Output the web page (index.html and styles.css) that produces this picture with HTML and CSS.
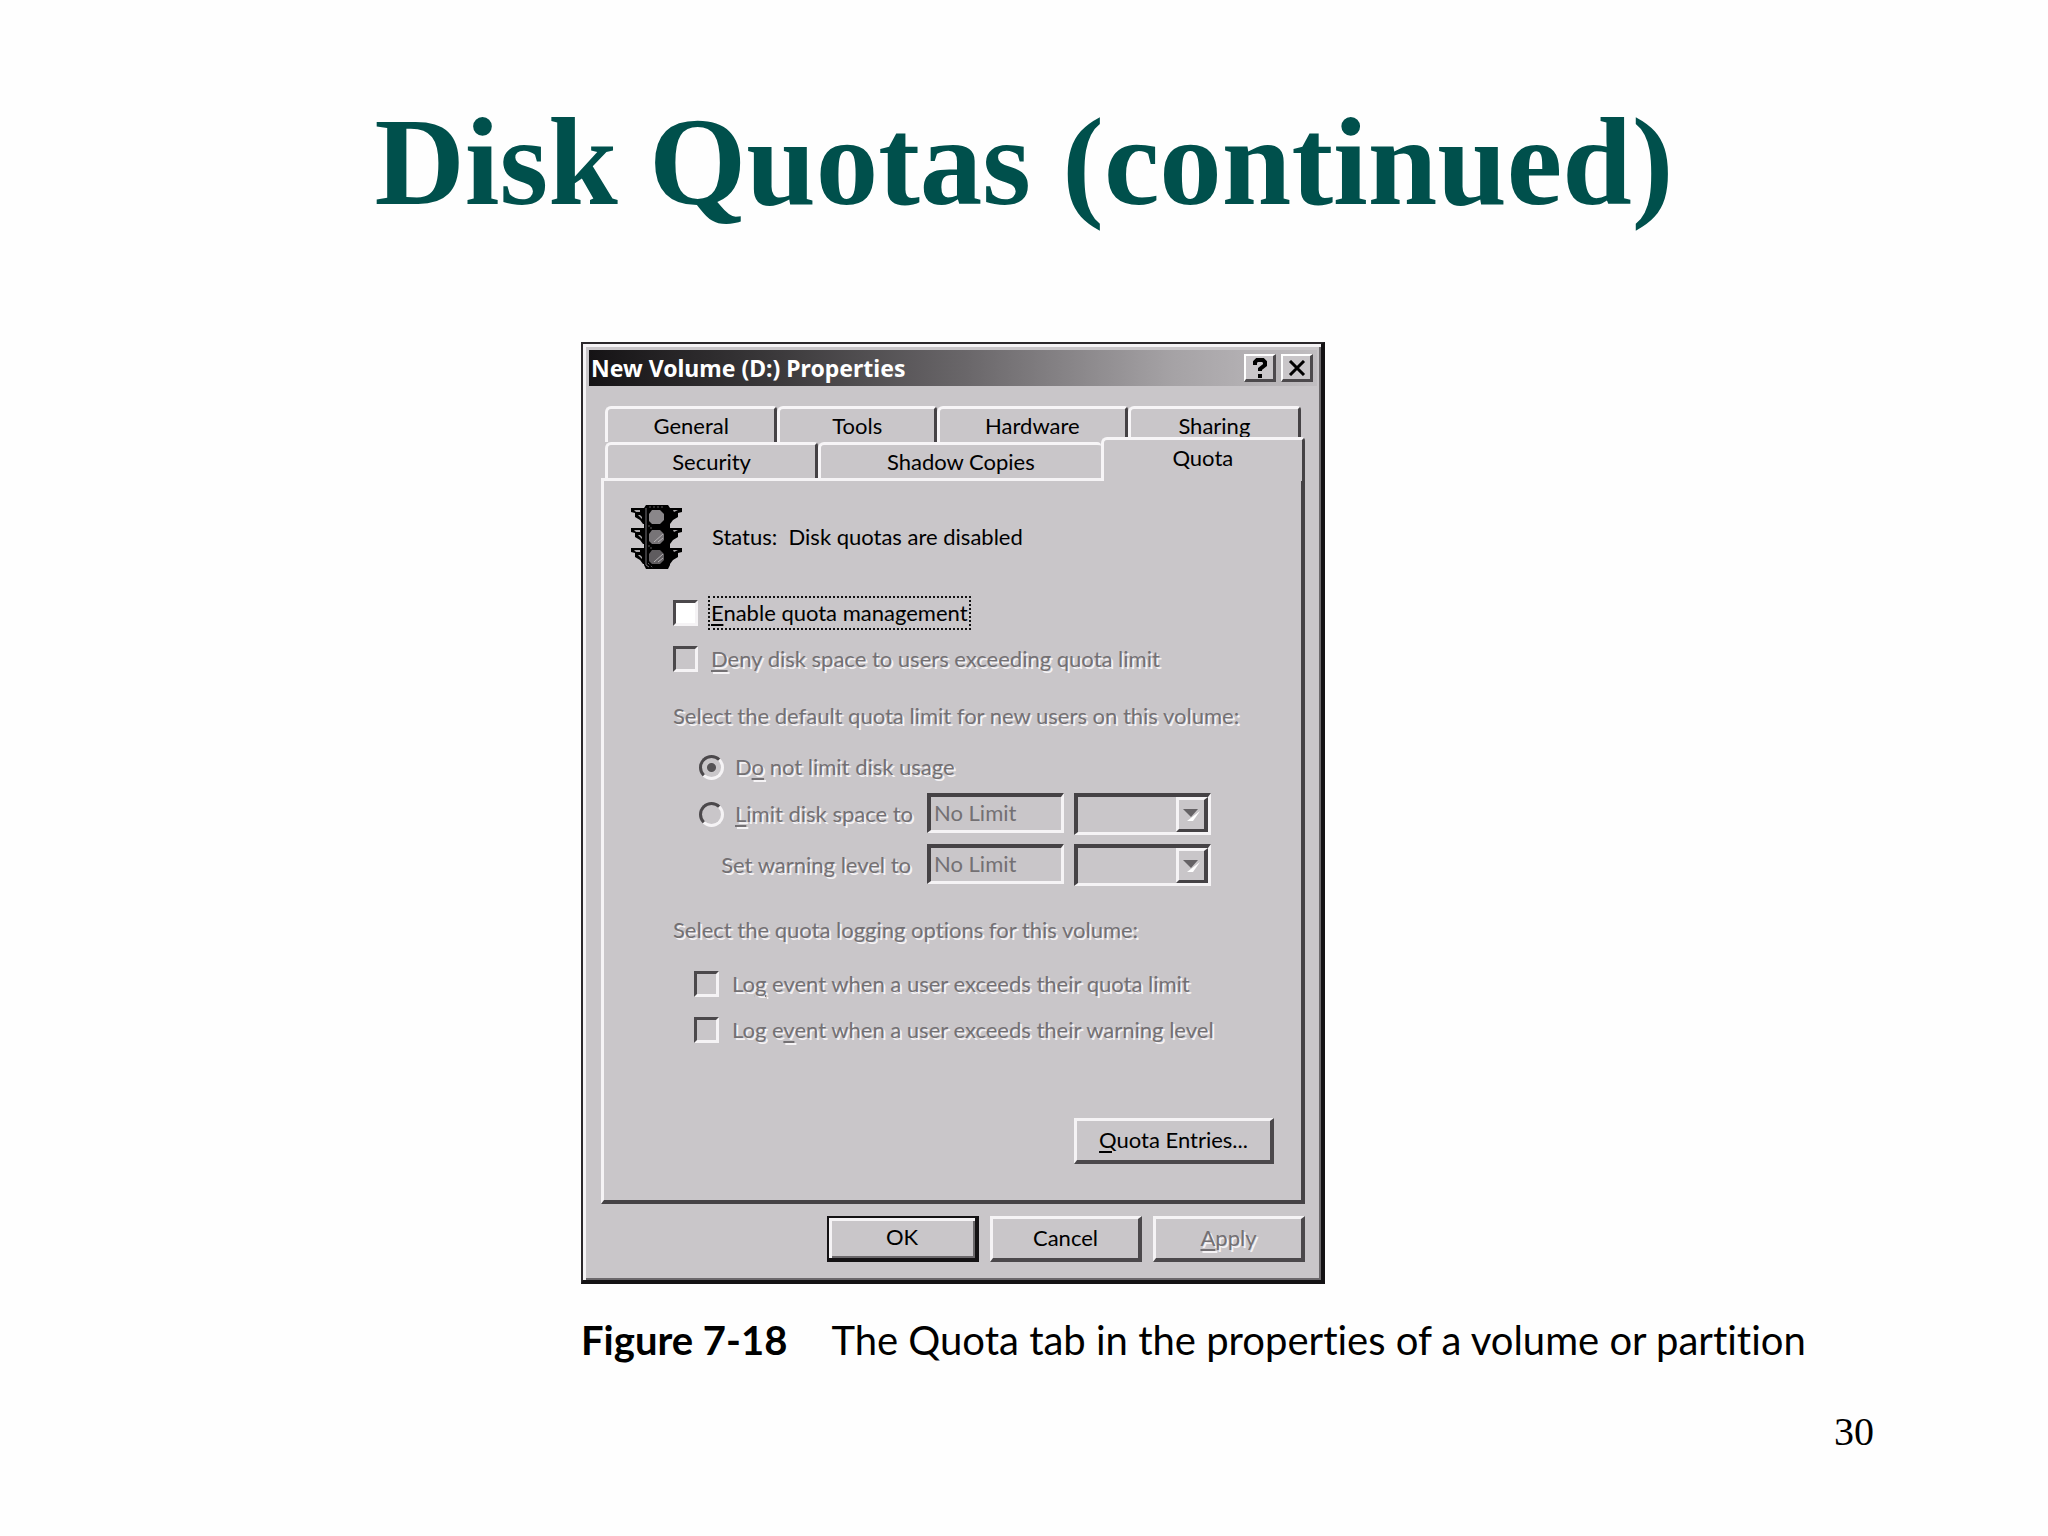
FILE: index.html
```html
<!DOCTYPE html>
<html lang="en">
<head>
    <meta charset="UTF-8">
    <meta name="viewport" content="width=device-width, initial-scale=1.0">
    <title>Disk Quotas (continued)</title>
    <link rel="stylesheet" href="styles.css">
</head>
<body>
    <main class="slide">
        <h1>Disk Quotas (continued)</h1>

        <figure class="figure">
            <div class="dialog">
                <div class="titlebar">
                    <span class="titlebar-text">New Volume (D:) Properties</span>
                    <button class="caption-button" type="button" aria-label="Help">
                        <svg viewBox="0 0 14 20" width="14" height="20">
                            <path d="M2 7V4L4 2H10L12 4V7L7 11V13M5 18H9" fill="none" stroke="#000" stroke-width="4"/>
                        </svg>
                    </button>
                    <button class="caption-button" type="button" aria-label="Close">
                        <svg viewBox="0 0 18 16" width="18" height="16">
                            <path d="M2 1L16 15M16 1L2 15" fill="none" stroke="#000" stroke-width="3"/>
                        </svg>
                    </button>
                </div>

                <div class="tabs">
                    <div class="tab-row">
                        <button class="tab general" type="button">General</button>
                        <button class="tab tools" type="button">Tools</button>
                        <button class="tab hardware" type="button">Hardware</button>
                        <button class="tab sharing" type="button">Sharing</button>
                    </div>
                    <div class="tab-row">
                        <button class="tab security" type="button">Security</button>
                        <button class="tab shadow" type="button">Shadow Copies</button>
                        <button class="tab quota active" type="button">Quota</button>
                    </div>
                </div>

                <form class="panel">
                    <div class="status">
                        <svg class="traffic-light" viewBox="0 0 51 66" width="51" height="66">
                            <g id="fins">
                                <path d="M0 4H14V20H12L9 16L4 13V9L0 8ZM51 4H37V20H39L42 16L47 13V9L51 8Z" fill="#000"/>
                                <path d="M3 6H9V8H5ZM7 11H9L11 13V15ZM42 6H47L43 8Z" fill="#a8a5a8"/>
                            </g>
                            <use href="#fins" y="20"/>
                            <use href="#fins" y="40"/>
                            <path d="M15 1H37L39 4V61L37 65H15L13 61V4Z" fill="#000"/>
                            <path d="M15 4V61L18 63" fill="none" stroke="#77747a" stroke-width="1"/>
                            <path d="M17 22H21M19 24H23M17 42H21M19 44H23M17 59L22 64M18 3H34" stroke="#5d5a5d" stroke-width="1" stroke-dasharray="2 2"/>
                            <path d="M21 6H29L33 10V16L29 20H21L18 17V10Z" fill="#8a878a"/>
                            <path d="M21 26H29L33 30V36L29 40H21L18 37V30Z" fill="#777477"/>
                            <path d="M21 46H29L33 50V56L29 60H21L18 57V50Z" fill="#5f5c5f"/>
                            <path d="M23 38L32 30M27 38L32 34M23 58L32 50M27 58L32 54" stroke="#b5b2b5" stroke-width="1"/>
                        </svg>
                        <span>Status:&nbsp; Disk quotas are disabled</span>
                    </div>

                    <div class="option enable">
                        <input type="checkbox" id="enable">
                        <label class="focused" for="enable"><u>E</u>nable quota management</label>
                    </div>
                    <div class="option deny">
                        <input type="checkbox" id="deny" disabled>
                        <label for="deny"><u>D</u>eny disk space to users exceeding quota limit</label>
                    </div>

                    <p class="hint limits-hint">Select the default quota limit for new users on this volume:</p>
                    <div class="option radio-option">
                        <input type="radio" name="limit" id="nolimit" checked disabled>
                        <label for="nolimit">D<u>o</u> not limit disk usage</label>
                    </div>
                    <div class="limit-row">
                        <div class="option radio-option">
                            <input type="radio" name="limit" id="limit" disabled>
                            <label for="limit"><u>L</u>imit disk space to</label>
                        </div>
                        <input class="amount" type="text" value="No Limit" aria-label="Disk space limit" disabled>
                        <div class="combo">
                            <select aria-label="Disk space unit" disabled><option></option></select>
                            <span class="combo-arrow"><svg viewBox="0 0 17 12" width="17" height="12"><path d="M4 12L17 2L10 12Z" fill="#fff"/><path d="M0 0H15L8 8Z" fill="#656265"/></svg></span>
                        </div>
                    </div>
                    <div class="limit-row">
                        <label class="warning" for="warning">Set warning level to</label>
                        <input class="amount" type="text" id="warning" value="No Limit" disabled>
                        <div class="combo">
                            <select aria-label="Warning level unit" disabled><option></option></select>
                            <span class="combo-arrow"><svg viewBox="0 0 17 12" width="17" height="12"><path d="M4 12L17 2L10 12Z" fill="#fff"/><path d="M0 0H15L8 8Z" fill="#656265"/></svg></span>
                        </div>
                    </div>

                    <p class="hint logging-hint">Select the quota logging options for this volume:</p>
                    <div class="option log-option">
                        <input type="checkbox" id="loglimit" disabled>
                        <label for="loglimit">Lo<u>g</u> event when a user exceeds their quota limit</label>
                    </div>
                    <div class="option log-option">
                        <input type="checkbox" id="logwarning" disabled>
                        <label for="logwarning">Log e<u>v</u>ent when a user exceeds their warning level</label>
                    </div>

                    <button class="button entries" type="button"><u>Q</u>uota Entries...</button>
                </form>

                <div class="buttons">
                    <button class="button default" type="button">OK</button>
                    <button class="button" type="button">Cancel</button>
                    <button class="button" type="button" disabled><u>A</u>pply</button>
                </div>
            </div>

            <figcaption><b>Figure 7-18</b><span>The Quota tab in the properties of a volume or partition</span></figcaption>
        </figure>

        <footer class="page-number">30</footer>
    </main>
</body>
</html>
```
FILE: styles.css
```css
* {
    box-sizing: border-box;
}
body {
    margin: 0;
    background: #fefefe;
    color: #000;
}
.slide {
    padding: 90px 174px 0;
}
h1 {
    margin: 0;
    font: bold 125px/144px "Liberation Serif", serif;
    color: #00504c;
    text-align: center;
}
.figure {
    margin: 108px 0 0 407px;
}

/* Window */
.dialog {
    max-width: 744px;
    padding: 6px 4px 18px 6px;
    background: #c9c6c9;
    border: 2px solid #2b282b;
    border-width: 2px 4px 4px 2px;
    border-right-color: #141214;
    border-bottom-color: #141214;
    box-shadow: inset 3px 3px #f5f3f5, inset -2px -2px #6b686b;
    font: 22px/34px Lato, sans-serif;
    font-variant-ligatures: none;
}
.titlebar {
    display: flex;
    align-items: center;
    gap: 5px;
    height: 36px;
    padding: 0 4px 0 2px;
    background: linear-gradient(90deg, #151315, #3a383a 25%, #6a676a 52%, #a5a2a5 80%, #c0bdc0);
}
.titlebar-text {
    flex: 1;
    color: #fff;
    font: bold 23px/36px "Noto Sans", sans-serif;
}
.caption-button {
    display: grid;
    place-items: center;
    width: 32px;
    height: 28px;
    padding: 0;
    background: #c9c6c9;
    border: solid;
    border-width: 2px 3px 3px 2px;
    border-color: #fff #4c494c #4c494c #fff;
}

/* Tabs */
.tabs {
    margin: 20px 12px 0;
    padding: 0 4px;
}
.tab-row {
    display: flex;
}
.tab {
    height: 36px;
    padding: 0 0 1px;
    background: #c9c6c9;
    color: #000;
    font: inherit;
    border: solid;
    border-width: 3px 3px 0 3px;
    border-color: #f7f5f7 #454245 #454245 #f7f5f7;
    border-radius: 6px 4px 0 0;
}
.general {
    flex: 172;
}
.tools {
    flex: 159;
}
.hardware {
    flex: 191;
}
.sharing {
    flex: 173;
}
.security {
    flex: 212;
}
.shadow {
    flex: 286;
    border-right: 0;
}
.quota {
    flex: 203;
}
.active {
    position: relative;
    height: 44px;
    margin: -5px -4px -3px 0;
    padding-bottom: 6px;
}

/* Quota page */
.panel {
    margin: 0 12px;
    padding: 23px 27px 36px;
    border: solid;
    border-width: 3px 4px 4px 3px;
    border-color: #f5f3f5 #454245 #454245 #f5f3f5;
}
.status {
    display: flex;
    align-items: center;
    gap: 30px;
}
.option {
    display: flex;
    align-items: center;
    gap: 10px;
}
.option label {
    padding: 0 3px;
}
.enable {
    margin: 26px 0 0 42px;
}
.deny {
    margin: 12px 0 0 42px;
}
u {
    text-decoration-thickness: 2px;
    text-underline-offset: 3px;
}
.focused {
    outline: 2px dotted #111;
    outline-offset: -2px;
}
input:disabled + label,
.hint,
.warning,
.button:disabled {
    color: #737073;
    text-shadow: 2px 2px #f5f3f5;
}
.hint {
    margin: 0 0 0 42px;
}
.limits-hint {
    margin-top: 23px;
    margin-bottom: 17px;
}
.logging-hint {
    margin-top: 27px;
    margin-bottom: 20px;
}
input[type="checkbox"],
input[type="radio"] {
    appearance: none;
    flex: none;
    width: 25px;
    height: 26px;
    margin: 0;
    border: 3px solid;
    border-color: #4b484b #f5f3f5 #f5f3f5 #4b484b;
}
input[type="checkbox"]:enabled {
    background: #fff;
}
input[type="radio"] {
    height: 25px;
    border-radius: 50%;
}
input[type="radio"]:checked {
    background: radial-gradient(circle, #555255 4px, transparent 5px);
}
.radio-option {
    gap: 8px;
    margin-left: 68px;
}
.limit-row {
    display: grid;
    grid-template-columns: 286px 137px 137px;
    gap: 10px;
    margin-top: 9px;
    align-items: center;
}
.limit-row .radio-option {
    white-space: nowrap;
}
.warning {
    padding-right: 6px;
    text-align: right;
}
.amount {
    align-self: start;
    width: 100%;
    height: 40px;
    padding: 0 0 2px 3px;
    background: #c9c6c9;
    color: #737073;
    font: inherit;
    border: solid;
    border-width: 4px 3px 3px 4px;
    border-color: #454245 #f5f3f5 #f5f3f5 #454245;
}
.combo {
    display: flex;
    height: 42px;
    border: solid;
    border-width: 4px 3px 3px 4px;
    border-color: #454245 #f5f3f5 #f5f3f5 #454245;
}
.combo select {
    appearance: none;
    flex: 1;
    min-width: 0;
    background: #c9c6c9;
    border: 0;
}
.combo-arrow {
    display: grid;
    place-items: center;
    width: 32px;
    border: solid;
    border-width: 3px 4px 3px 3px;
    border-color: #f5f3f5 #454245 #454245 #f5f3f5;
}
.log-option {
    margin: 12px 0 0 63px;
}

/* Push buttons */
.button {
    width: 152px;
    height: 46px;
    padding: 0 0 2px;
    background: #c9c6c9;
    color: #000;
    font: inherit;
    border: solid;
    border-width: 3px 4px 4px 3px;
    border-color: #f5f3f5 #4b484b #4b484b #f5f3f5;
}
.entries {
    display: block;
    width: 200px;
    margin: 71px 0 0 auto;
}
.default {
    border-width: 2px 4px 4px 2px;
    border-color: #141214;
    box-shadow: inset 3px 3px #f5f3f5, inset -2px -2px #6b686b;
}
.buttons {
    display: flex;
    justify-content: flex-end;
    gap: 11px;
    margin: 12px 12px 0;
}

figcaption {
    display: flex;
    gap: 44px;
    margin-top: 32px;
    font: 40px/48px Lato, sans-serif;
    font-variant-ligatures: none;
    white-space: nowrap;
}
.page-number {
    margin-top: 45px;
    font: 40px/46px "Liberation Serif", serif;
    text-align: right;
}
```
